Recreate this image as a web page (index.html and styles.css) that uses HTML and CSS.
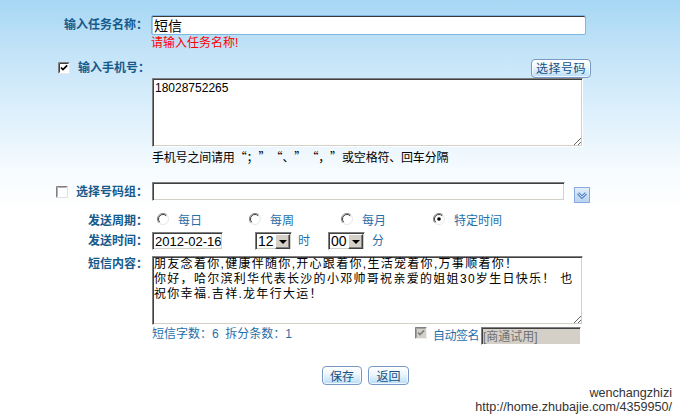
FILE: index.html
```html
<!DOCTYPE html>
<html lang="zh-CN">
<head>
<meta charset="utf-8">
<title>短信任务</title>
<link rel="stylesheet" href="styles.css">
</head>
<body>
<div class="page">
  <div class="row r-name">
    <div class="lbl">输入任务名称：</div>
    <input class="name-input" type="text" value="短信">
  </div>
  <div class="err">请输入任务名称!</div>

  <div class="row r-phone">
    <div class="lbl lbl-wide">
      <svg class="cb" width="12" height="12" viewBox="0 0 12 12"><rect x="0" y="0" width="12" height="12" fill="#fff"/><path d="M0.5 11.5V0.5H11.5" stroke="#808080" fill="none"/><path d="M1.5 10.5V1.5H10.5" stroke="#404040" fill="none"/><path d="M11.5 0.5V11.5H0.5" stroke="#e8e8e8" fill="none"/><path d="M3 5.5L5 7.6L9.2 3.4" stroke="#000" stroke-width="1.7" fill="none"/></svg>
      <span>输入手机号：</span>
    </div>
    <div class="phone-tools"><button class="btn btn-pick" type="button">选择号码</button></div>
  </div>
  <textarea class="area phone-area">18028752265</textarea>
  <div class="hint">手机号之间请用<span class="ql">“</span>；<span class="qr">”</span><span class="ql">“</span>、<span class="qr">”</span><span class="ql">“</span>，<span class="qr">”</span>或空格符、回车分隔</div>

  <div class="row r-group">
    <div class="lbl">
      <svg class="cb cb-g" width="12" height="12" viewBox="0 0 12 12"><rect x="0" y="0" width="12" height="12" fill="#fff"/><path d="M0.5 11.5V0.5H11.5" stroke="#808080" fill="none"/><path d="M1.5 10.5V1.5H10.5" stroke="#b0b0b0" fill="none"/><path d="M11.5 0.5V11.5H0.5" stroke="#e0e0e0" fill="none"/></svg>
      <span>选择号码组：</span>
    </div>
    <input class="box group-input" type="text" value="">
    <svg class="dd-icon" width="16" height="16" viewBox="0 0 16 16"><defs><linearGradient id="g1" x1="0" y1="0" x2="0" y2="1"><stop offset="0" stop-color="#e3eefb"/><stop offset="1" stop-color="#b7d2f0"/></linearGradient></defs><rect x="0.5" y="0.5" width="15" height="15" fill="url(#g1)" stroke="#86abdc"/><path d="M4 6.2L8 10.2L12 6.2" stroke="#4a80c4" stroke-width="3" fill="none" stroke-linejoin="round"/><path d="M4 6.2L8 10.2L12 6.2" stroke="#f2f7fd" stroke-width="1" fill="none"/></svg>
  </div>

  <div class="row r-period">
    <div class="lbl">发送周期：</div>
    <div class="opts">
      <div class="opt"><svg class="rd" width="12" height="12" viewBox="0 0 12 12"><circle cx="6" cy="6" r="5.5" fill="#fff"/><path d="M2.1 9.9A5.5 5.5 0 0 1 9.9 2.1" stroke="#808080" fill="none"/><path d="M2.8 9.2A4.5 4.5 0 0 1 9.2 2.8" stroke="#404040" fill="none"/><path d="M9.9 2.1A5.5 5.5 0 0 1 2.1 9.9" stroke="#e6e6e6" fill="none"/></svg><span>每日</span></div>
      <div class="opt"><svg class="rd" width="12" height="12" viewBox="0 0 12 12"><circle cx="6" cy="6" r="5.5" fill="#fff"/><path d="M2.1 9.9A5.5 5.5 0 0 1 9.9 2.1" stroke="#808080" fill="none"/><path d="M2.8 9.2A4.5 4.5 0 0 1 9.2 2.8" stroke="#404040" fill="none"/><path d="M9.9 2.1A5.5 5.5 0 0 1 2.1 9.9" stroke="#e6e6e6" fill="none"/></svg><span>每周</span></div>
      <div class="opt"><svg class="rd" width="12" height="12" viewBox="0 0 12 12"><circle cx="6" cy="6" r="5.5" fill="#fff"/><path d="M2.1 9.9A5.5 5.5 0 0 1 9.9 2.1" stroke="#808080" fill="none"/><path d="M2.8 9.2A4.5 4.5 0 0 1 9.2 2.8" stroke="#404040" fill="none"/><path d="M9.9 2.1A5.5 5.5 0 0 1 2.1 9.9" stroke="#e6e6e6" fill="none"/></svg><span>每月</span></div>
      <div class="opt"><svg class="rd" width="12" height="12" viewBox="0 0 12 12"><circle cx="6" cy="6" r="5.5" fill="#fff"/><path d="M2.1 9.9A5.5 5.5 0 0 1 9.9 2.1" stroke="#808080" fill="none"/><path d="M2.8 9.2A4.5 4.5 0 0 1 9.2 2.8" stroke="#404040" fill="none"/><path d="M9.9 2.1A5.5 5.5 0 0 1 2.1 9.9" stroke="#e6e6e6" fill="none"/><circle cx="6" cy="6" r="1.8" fill="#000"/></svg><span>特定时间</span></div>
    </div>
  </div>

  <div class="row r-time">
    <div class="lbl">发送时间：</div>
    <input class="box date-input" type="text" value="2012-02-16">
    <div class="sel sel-h"><span class="sv">12</span><span class="sa"><i></i></span></div>
    <span class="unit u-h">时</span>
    <div class="sel sel-m"><span class="sv">00</span><span class="sa"><i></i></span></div>
    <span class="unit u-m">分</span>
  </div>

  <div class="row r-content">
    <div class="lbl">短信内容：</div>
    <textarea class="area msg-area" wrap="off">朋友念着你,健康伴随你,开心跟着你,生活宠着你,万事顺着你！
你好，哈尔滨利华代表长沙的小邓帅哥祝亲爱的姐姐30岁生日快乐！ 也
祝你幸福.吉祥.龙年行大运！</textarea>
  </div>

  <div class="row r-count">
    <span class="count">短信字数：6&nbsp;&nbsp;拆分条数：1</span>
    <div class="sign">
      <svg class="cb" width="12" height="12" viewBox="0 0 12 12"><rect x="0" y="0" width="12" height="12" fill="#d4d0c8"/><path d="M0.5 11.5V0.5H11.5" stroke="#808080" fill="none"/><path d="M1.5 10.5V1.5H10.5" stroke="#a0a0a0" fill="none"/><path d="M11.5 0.5V11.5H0.5" stroke="#f0f0f0" fill="none"/><path d="M3 5.5L5 7.6L9.2 3.4" stroke="#808080" stroke-width="1.7" fill="none"/></svg>
      <span class="sign-lbl">自动签名</span>
      <input class="box sign-input" type="text" value="[商通试用]" disabled>
    </div>
  </div>

  <div class="row r-actions">
    <button class="btn btn-save" type="button">保存</button>
    <button class="btn btn-back" type="button">返回</button>
  </div>

  <div class="mark">wenchangzhizi<br>http://home.zhubajie.com/4359950/</div>
</div>
</body>
</html>
```

FILE: styles.css
```css
* { box-sizing: border-box; }
html, body { margin: 0; padding: 0; }
body {
  width: 680px;
  height: 414px;
  overflow: hidden;
  font-family: "Liberation Sans", "Noto Sans CJK SC", sans-serif;
  font-size: 12px;
  color: #000;
  background: linear-gradient(180deg, #a6d7f4 0px, #c2e3f8 50px, #e0f1fc 120px, #f6fbfe 170px, #ffffff 210px);
}
.page {
  position: relative;
  width: 680px;
  height: 414px;
  padding-top: 15px;
}
.row { display: flex; align-items: center; }
.lbl {
  width: 148px;
  flex: none;
  display: flex;
  justify-content: flex-end;
  align-items: center;
  font-weight: bold;
  color: #165a8c;
  line-height: 14px;
  white-space: nowrap;
}
.lbl-wide { width: 150px; }
.cb { flex: none; display: block; }
.lbl .cb { margin-right: 8px; }

input, textarea, button {
  font-family: "Liberation Sans", "Noto Sans CJK SC", sans-serif;
  margin: 0;
  outline: none;
}

/* task name */
.r-name { height: 20px; }
.name-input {
  margin-left: 3px;
  width: 435px;
  height: 20px;
  border: 1px solid #7db6e1;
  border-radius: 2px;
  box-shadow: inset 0 1px 0 #3a3a3a, inset 1px 0 0 #9fc9ea;
  background: #fff;
  padding: 0 2px;
  font-size: 14px;
  line-height: 18px;
  color: #000;
}
.err {
  margin: 2px 0 0 151px;
  color: #ff0000;
  line-height: 12px;
  height: 12px;
}

/* phone */
.r-phone { margin-top: 9px; height: 20px; }
.phone-tools {
  margin-left: 2px;
  width: 439px;
  display: flex;
  justify-content: flex-end;
}
.btn {
  height: 19px;
  padding: 0;
  border: 1px solid #7799c4;
  border-radius: 4px;
  background: linear-gradient(180deg, #ffffff 0%, #eef7fd 40%, #cfe8fa 75%, #b8dcf6 100%);
  box-shadow: inset 0 0 0 1px rgba(255,255,255,0.75);
  color: #17507f;
  font-size: 12px;
  line-height: 16px;
  font-family: "Noto Sans CJK SC", sans-serif;
  cursor: pointer;
}
.btn-pick { width: 60px; letter-spacing: 0.5px; }

.area {
  display: block;
  background: #fff;
  border: 1px solid;
  border-color: #808080 #ffffff #ffffff #808080;
  box-shadow: inset 1px 1px 0 #404040, inset -1px -1px 0 #d4d0c8;
  color: #000;
  padding: 0;
}
.phone-area {
  margin-left: 152px;
  width: 431px;
  height: 69px;
  font-size: 12px;
  line-height: 14px;
  padding: 2px 0 0 2px;
}
.hint {
  margin: 3px 0 0 152px;
  line-height: 14px;
  height: 14px;
  white-space: nowrap;
  letter-spacing: -0.2px;
  font-family: "Noto Sans CJK SC", sans-serif;
}
.ql, .qr { display: inline-block; width: 12px; }
.ql { text-align: right; }
.qr { text-align: left; }

/* group */
.r-group { margin-top: 18px; height: 19px; }
.box {
  background: #fff;
  border: 1px solid;
  border-color: #808080 #ffffff #ffffff #808080;
  box-shadow: inset 1px 1px 0 #404040, inset -1px -1px 0 #d4d0c8;
  padding: 0 2px;
}
.group-input { margin-left: 4px; width: 413px; height: 19px; }
.dd-icon { margin-left: 9px; margin-top: 6px; flex: none; display: block; }

/* period */
.r-period { margin-top: 12px; height: 16px; }
.opts { display: flex; margin-left: 9px; }
.opt { width: 92px; display: flex; align-items: center; color: #1f6fa9; line-height: 14px; }
.rd { display: block; flex: none; margin-top: -4px; }
.opt span { margin-left: 9px; }

/* time */
.r-time { margin-top: 3px; height: 18px; }
.date-input {
  margin-left: 4px;
  width: 71px;
  height: 18px;
  font-size: 13px;
  line-height: 16px;
  padding: 0 1px 0 2px;
}
.sel {
  display: flex;
  height: 18px;
  width: 37px;
  background: #fff;
  border: 1px solid;
  border-color: #808080 #ffffff #ffffff #808080;
  box-shadow: inset 1px 1px 0 #404040, inset -1px -1px 0 #d4d0c8;
  padding: 1px;
}
.sel-h { margin-left: 32px; }
.sel-m { margin-left: 18px; }
.sv { flex: 1; font-size: 14px; line-height: 15px; padding-left: 1px; }
.sa {
  width: 15px;
  height: 15px;
  flex: none;
  background: #d4d0c8;
  border: 1px solid;
  border-color: #ffffff #404040 #404040 #ffffff;
  box-shadow: inset -1px -1px 0 #808080;
  display: flex;
  align-items: center;
  justify-content: center;
}
.sa i {
  display: block;
  width: 0; height: 0;
  border-left: 4px solid transparent;
  border-right: 4px solid transparent;
  border-top: 4px solid #000;
  margin-top: 1px;
}
.unit { color: #1f6fa9; line-height: 14px; }
.u-h { margin-left: 6px; }
.u-m { margin-left: 7px; }

/* content */
.r-content { margin-top: 6px; align-items: flex-start; }
.r-content .lbl { padding-top: 1px; }
.msg-area {
  margin-left: 4px;
  width: 431px;
  height: 69px;
  font-size: 12px;
  line-height: 15px;
  letter-spacing: 1.3px;
  padding: 0 0 0 1px;
  white-space: pre;
  overflow: hidden;
}

/* count + sign */
.r-count { margin: 1px 0 0 152px; width: 429px; height: 19px; justify-content: space-between; }
.count { color: #1f6fa9; line-height: 14px; margin-top: -3px; }
.sign { display: flex; align-items: center; }
.sign .cb { margin-top: -5px; }
.sign-lbl { color: #1f6fa9; margin-left: 6px; margin-right: 2px; letter-spacing: -0.5px; line-height: 14px; }
.sign-input {
  width: 100px;
  height: 18px;
  background: #d4d0c8;
  color: #707070;
  font-size: 12px;
  padding: 0 1px;
}

/* actions */
.r-actions { margin: 21px 0 0 152px; width: 427px; justify-content: center; gap: 6px; height: 19px; }
.btn-save { width: 40px; }
.btn-back { width: 41px; }

.mark {
  position: absolute;
  right: 8px;
  bottom: 0;
  text-align: right;
  font-family: "Liberation Sans", sans-serif;
  font-size: 12.6px;
  line-height: 14px;
  color: #333;
  text-shadow: 0 0 1px #fff;
}
```
